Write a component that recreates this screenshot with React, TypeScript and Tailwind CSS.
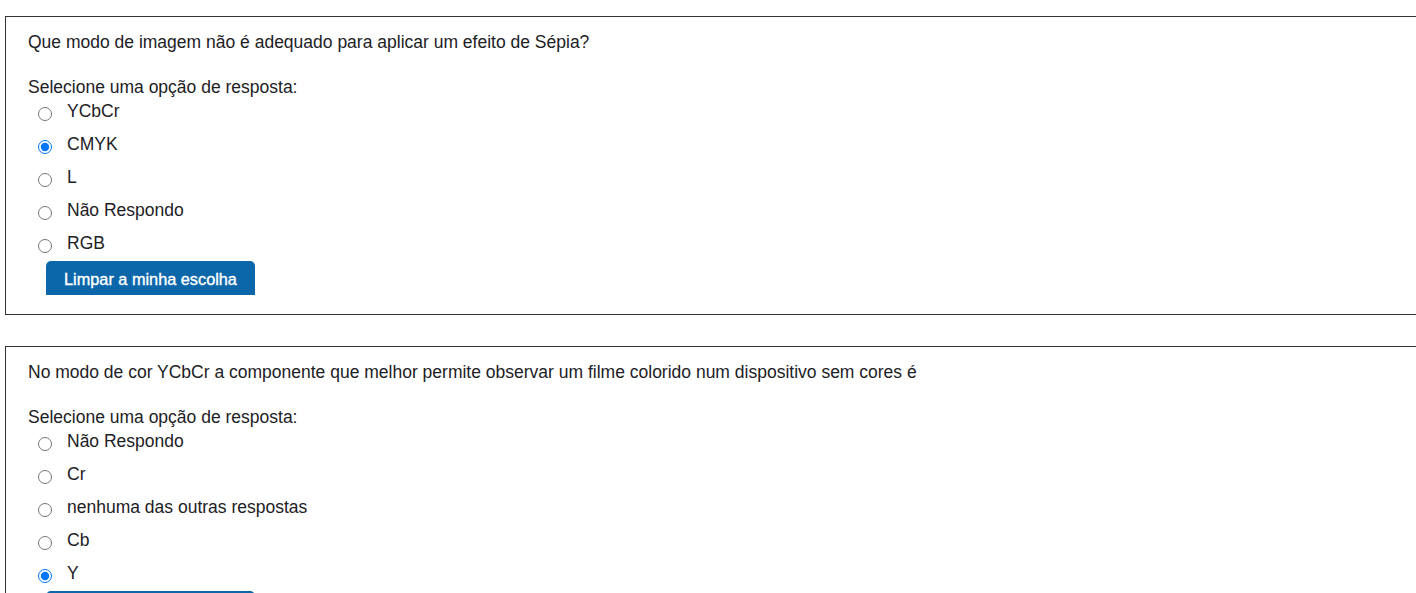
type Question = {
  id: string;
  text: string;
  options: string[];
  selected: number;
};

const questions: Question[] = [
  {
    id: "q1",
    text: "Que modo de imagem não é adequado para aplicar um efeito de Sépia?",
    options: ["YCbCr", "CMYK", "L", "Não Respondo", "RGB"],
    selected: 1,
  },
  {
    id: "q2",
    text: "No modo de cor YCbCr a componente que melhor permite observar um filme colorido num dispositivo sem cores é",
    options: ["Não Respondo", "Cr", "nenhuma das outras respostas", "Cb", "Y"],
    selected: 4,
  },
];

const QuestionBox = ({ q }: { q: Question }) => (
  <div className="w-[1440px] border border-[#333] bg-white pl-[22px] pt-[13px] pb-[19px]">
    <p className="leading-6">{q.text}</p>
    <p className="mt-[21px] leading-6">Selecione uma opção de resposta:</p>
    <div className="flex flex-col gap-[9px]">
      {q.options.map((opt, i) => (
        <label key={opt} className="flex h-6 items-center pl-[10px]">
          <input
            type="radio"
            name={q.id}
            defaultChecked={i === q.selected}
            className="m-0 mt-[6px] h-[14px] w-[14px]"
          />
          <span className="ml-[15px]">{opt}</span>
        </label>
      ))}
    </div>
    <button
      type="button"
      className="mt-[6px] ml-[18px] h-[34px] w-[209px] rounded-t-[5px] bg-[#0b67aa] pt-[2px] text-[16.3px] text-white [-webkit-text-stroke:0.35px_white]"
    >
      Limpar a minha escolha
    </button>
  </div>
);

export default function App() {
  return (
    <div
      className="h-[593px] w-full overflow-hidden bg-white pt-[16px] pl-[5px] text-[17.5px] text-[#1d2125]"
      style={{ fontFamily: '"Liberation Sans", Arial, sans-serif' }}
    >
      <div className="flex flex-col gap-[31px]">
        {questions.map((q) => (
          <QuestionBox key={q.id} q={q} />
        ))}
      </div>
    </div>
  );
}
